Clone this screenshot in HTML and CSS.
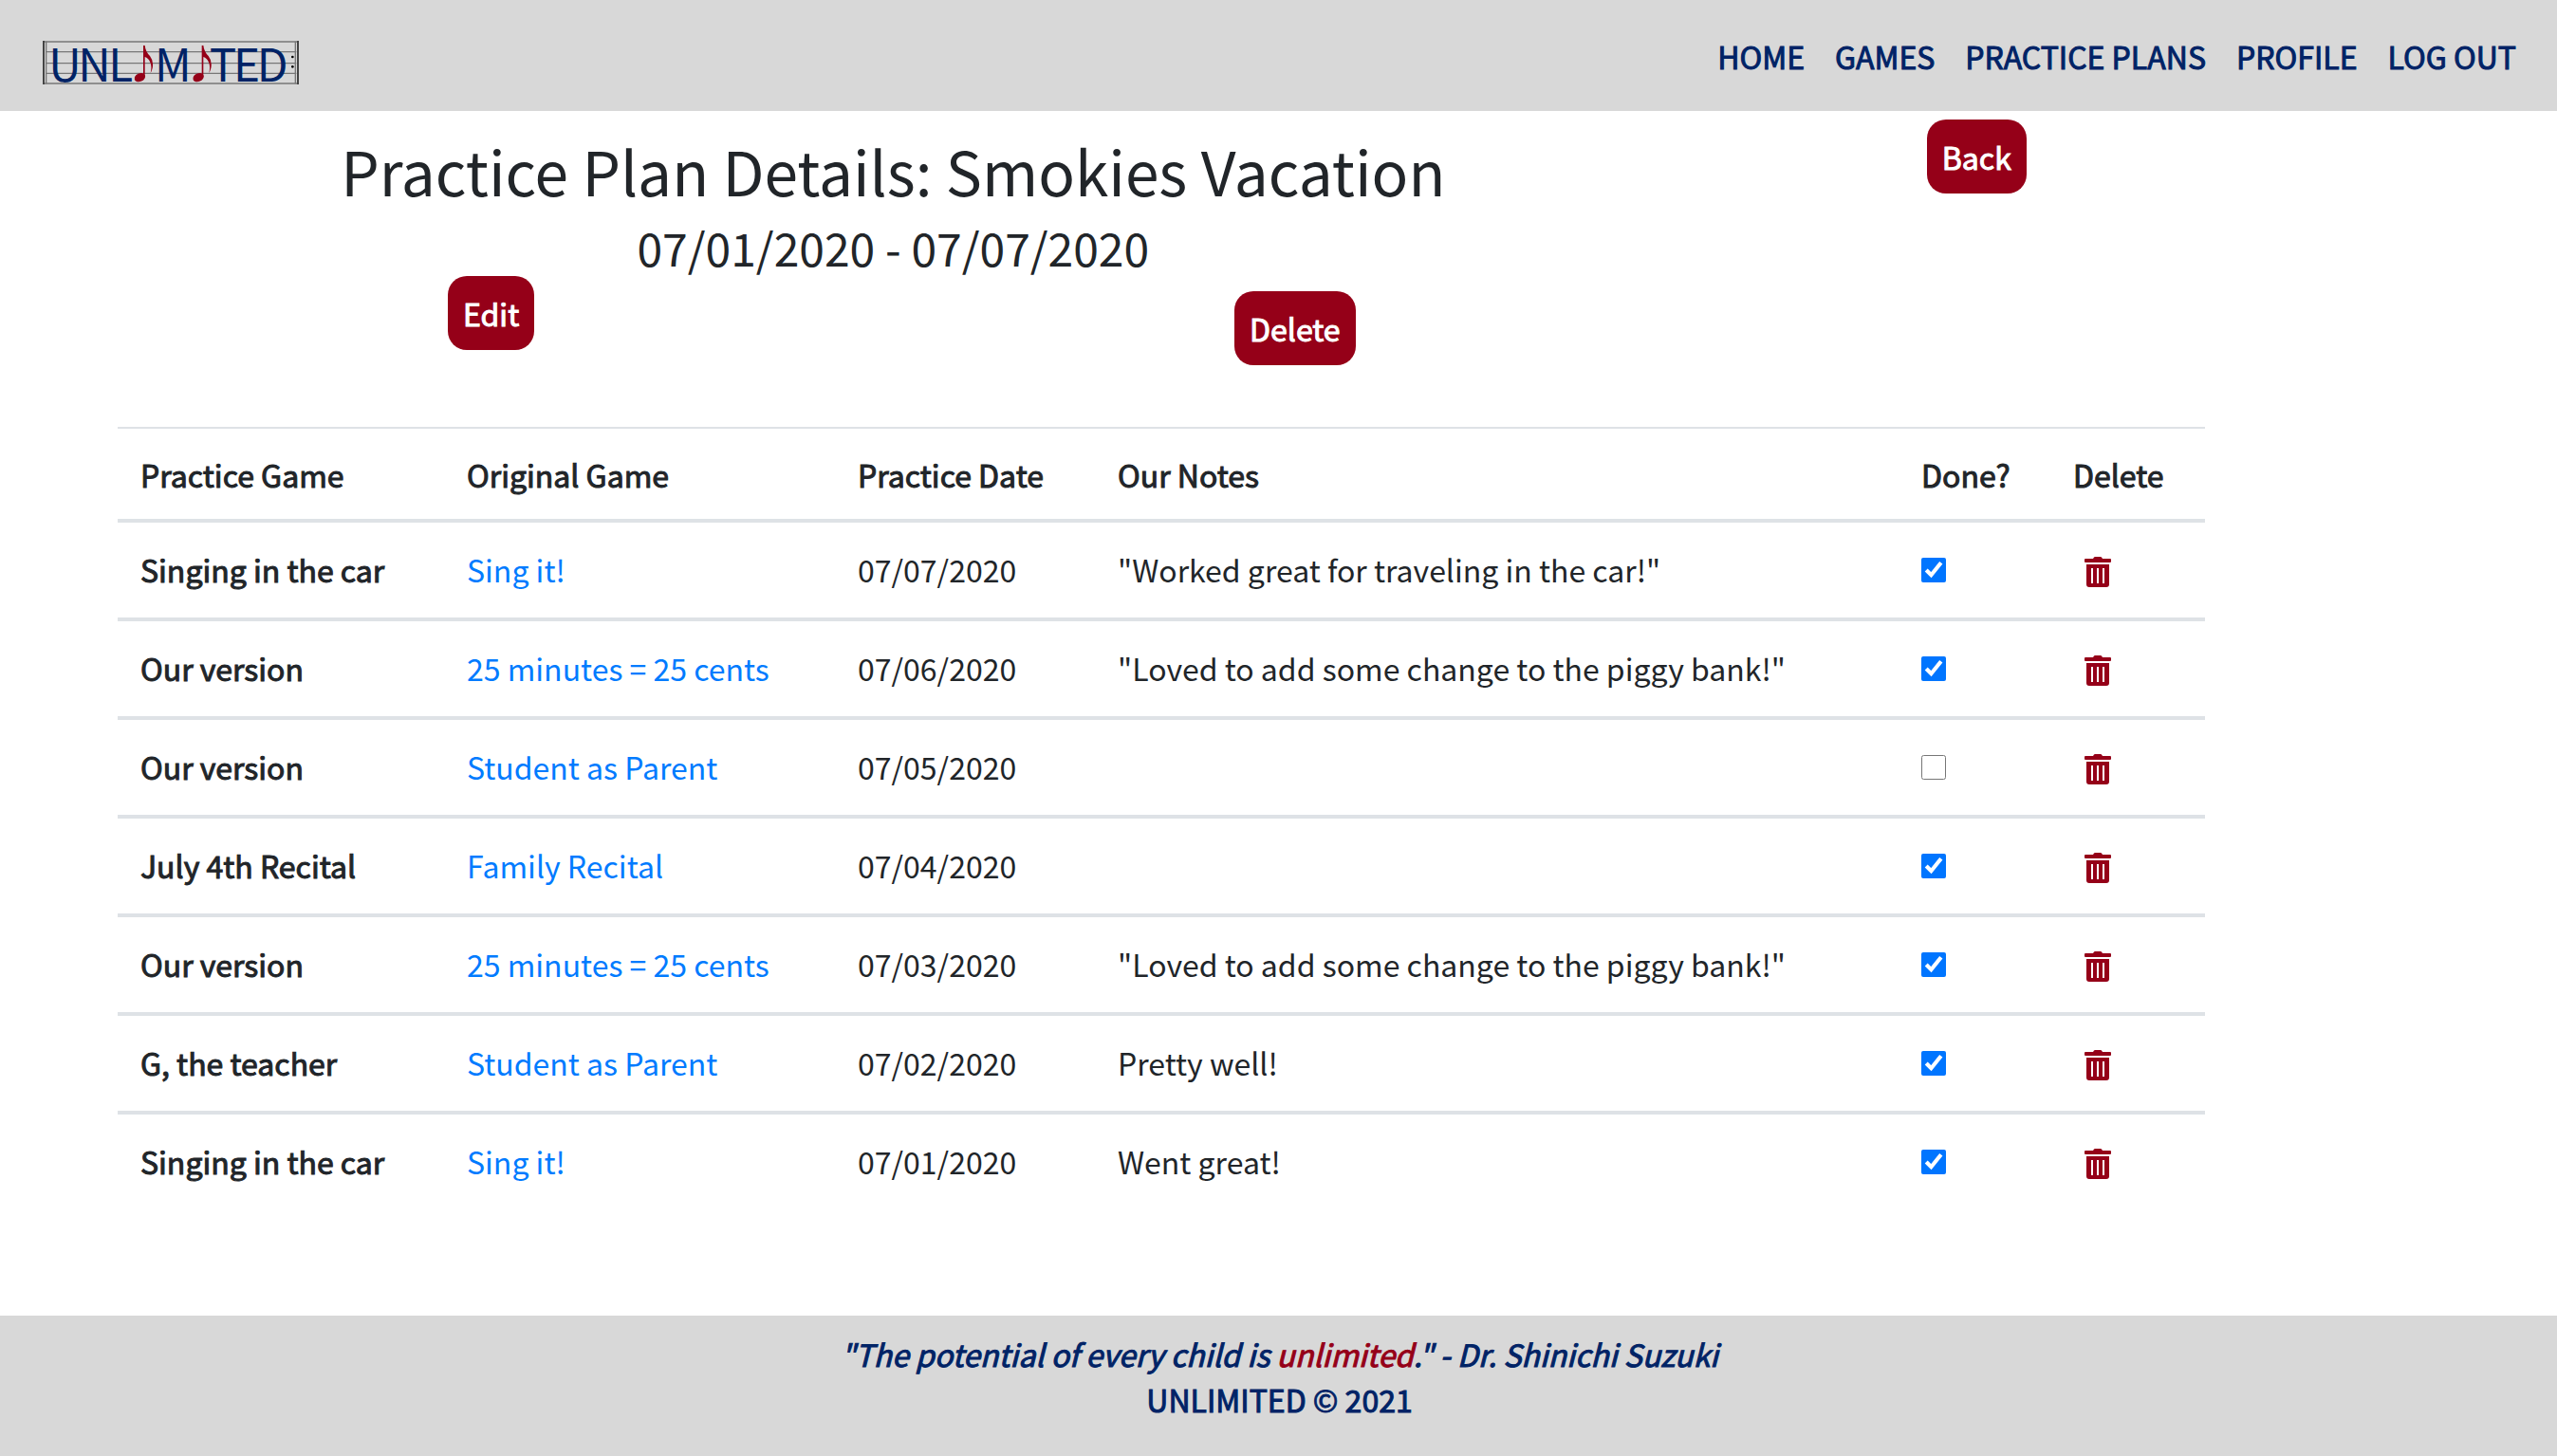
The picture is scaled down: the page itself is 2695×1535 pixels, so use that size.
FILE: index.html
```html
<!DOCTYPE html>
<html lang="en">
<head>
<meta charset="utf-8">
<meta name="viewport" content="width=device-width, initial-scale=1">
<title>Practice Plan Details</title>
<link rel="stylesheet" href="styles.css">
</head>
<body>
<svg class="sprite" aria-hidden="true">
  <symbol id="trash" viewBox="0 0 28 32">
    <path fill-rule="evenodd" d="M1 2h8l1-1.500q.4-.5 1-.5h6q.6 0 1 .5L19 2h8q1 0 1 1v2q0 1-1 1H1Q0 6 0 5V3q0-1 1-1zM2 8h24v21q0 3-3 3H5q-3 0-3-3zM7 12v16h2V12zM13 12v16h2V12zM19 12v16h2V12z"/>
  </symbol>
  <symbol id="note" viewBox="0 0 60 118">
    <ellipse cx="17" cy="102" rx="18" ry="13" transform="rotate(-25 17 102)"/>
    <path d="M28 0h5q2 20 16 34 14 18 7 42-2 8-5 12 5-22-1-34-6-14-17-17v64h-5z"/>
  </symbol>
</svg>
<header class="topbar">
  <a class="brand" href="#" aria-label="Unlimited home">
    <svg class="logo" viewBox="0 0 810 138">
      <g class="staff">
        <path d="M0 3h810M10 35h792M10 71h792M10 103h792M0 135h810"/>
        <path d="M11 2v134M799 2v134"/>
      </g>
      <path class="bars" d="M3 0v138M807 0v138"/>
      <g class="letters">
        <text x="19 112 208" y="130">UNL</text>
        <text x="354" y="130">M</text>
        <text x="527 603 677" y="130">TED</text>
      </g>
      <g class="notes">
        <use href="#note" x="290" y="14" width="60" height="118"/>
        <use href="#note" x="475" y="14" width="60" height="118"/>
      </g>
      <circle cx="790" cy="51" r="4"/><circle cx="790" cy="82" r="4"/>
    </svg>
  </a>
  <nav class="menu">
    <a href="#">HOME</a>
    <a href="#">GAMES</a>
    <a href="#">PRACTICE PLANS</a>
    <a href="#">PROFILE</a>
    <a href="#">LOG OUT</a>
  </nav>
</header>
<main>
  <section class="intro">
    <div class="plan">
      <h1>Practice Plan Details: Smokies Vacation</h1>
      <h2>07/01/2020 - 07/07/2020</h2>
      <div class="actions">
        <button class="btn" type="button">Edit</button>
        <button class="btn btn-delete" type="button">Delete</button>
      </div>
    </div>
    <div class="back"><button class="btn" type="button">Back</button></div>
  </section>
  <table class="games">
    <colgroup><col class="c-game"><col class="c-orig"><col class="c-date"><col class="c-notes"><col class="c-done"><col class="c-del"></colgroup>
    <thead>
      <tr><th scope="col">Practice Game</th><th scope="col">Original Game</th><th scope="col">Practice Date</th><th scope="col">Our Notes</th><th scope="col">Done?</th><th scope="col">Delete</th></tr>
    </thead>
    <tbody>
      <tr><th scope="row">Singing in the car</th><td><a href="#">Sing it!</a></td><td>07/07/2020</td><td>"Worked great for traveling in the car!"</td><td><input type="checkbox" aria-label="Done 07/07/2020" checked></td><td><button class="trash" type="button" aria-label="Delete 07/07/2020"><svg><use href="#trash"/></svg></button></td></tr>
      <tr><th scope="row">Our version</th><td><a href="#">25 minutes = 25 cents</a></td><td>07/06/2020</td><td>"Loved to add some change to the piggy bank!"</td><td><input type="checkbox" aria-label="Done 07/06/2020" checked></td><td><button class="trash" type="button" aria-label="Delete 07/06/2020"><svg><use href="#trash"/></svg></button></td></tr>
      <tr><th scope="row">Our version</th><td><a href="#">Student as Parent</a></td><td>07/05/2020</td><td></td><td><input type="checkbox" aria-label="Done 07/05/2020"></td><td><button class="trash" type="button" aria-label="Delete 07/05/2020"><svg><use href="#trash"/></svg></button></td></tr>
      <tr><th scope="row">July 4th Recital</th><td><a href="#">Family Recital</a></td><td>07/04/2020</td><td></td><td><input type="checkbox" aria-label="Done 07/04/2020" checked></td><td><button class="trash" type="button" aria-label="Delete 07/04/2020"><svg><use href="#trash"/></svg></button></td></tr>
      <tr><th scope="row">Our version</th><td><a href="#">25 minutes = 25 cents</a></td><td>07/03/2020</td><td>"Loved to add some change to the piggy bank!"</td><td><input type="checkbox" aria-label="Done 07/03/2020" checked></td><td><button class="trash" type="button" aria-label="Delete 07/03/2020"><svg><use href="#trash"/></svg></button></td></tr>
      <tr><th scope="row">G, the teacher</th><td><a href="#">Student as Parent</a></td><td>07/02/2020</td><td>Pretty well!</td><td><input type="checkbox" aria-label="Done 07/02/2020" checked></td><td><button class="trash" type="button" aria-label="Delete 07/02/2020"><svg><use href="#trash"/></svg></button></td></tr>
      <tr><th scope="row">Singing in the car</th><td><a href="#">Sing it!</a></td><td>07/01/2020</td><td>Went great!</td><td><input type="checkbox" aria-label="Done 07/01/2020" checked></td><td><button class="trash" type="button" aria-label="Delete 07/01/2020"><svg><use href="#trash"/></svg></button></td></tr>
    </tbody>
  </table>
</main>
<footer class="footer">
  <p class="quote">"The potential of every child is <span>unlimited</span>." - Dr. Shinichi Suzuki</p>
  <p>UNLIMITED © 2021</p>
</footer>
</body>
</html>
```
FILE: styles.css
```css
* { box-sizing: border-box; }
body {
  margin: 0;
  min-height: 100vh;
  display: flex;
  flex-direction: column;
  background: #fff;
  color: #212529;
  font: 400 32px/48px "Noto Sans CJK JP", "Noto Sans", sans-serif;
}
h1, h2, p { margin: 0; }
a { color: #007bff; text-decoration: none; }
.sprite { position: absolute; width: 0; height: 0; }
.menu a, .btn, .games th, .footer { -webkit-text-stroke: 1px; }

.topbar {
  display: flex;
  justify-content: space-between;
  align-items: center;
  height: 117px;
  padding: 0 43px 0 44px;
  background: #d8d8d8;
}
.brand { display: flex; padding-top: 14px; }
.logo { width: 272px; height: 46px; overflow: visible; }
.staff { fill: none; stroke: #777; stroke-width: 4; }
.bars { fill: none; stroke: #444; stroke-width: 6; }
.letters { fill: #002366; font: 400 143px "Noto Sans CJK JP", "Noto Sans", sans-serif; }
.notes { fill: #950018; }
.menu { display: flex; gap: 32px; }
.menu a { color: #002366; }

main { flex: 1; }
.intro {
  display: grid;
  grid-template-columns: 2fr 1fr;
  padding: 9px 231px 0 180px;
  text-align: center;
}
h1 { font-size: 64px; line-height: 84px; font-weight: 400; padding-top: 11px; }
h2 { font-size: 48px; line-height: 62px; font-weight: 400; padding-top: 8px; }
.actions {
  display: flex;
  justify-content: space-between;
  align-items: flex-start;
  padding: 0 18% 0 292px;
}
.btn {
  height: 78px;
  padding: 0 16px;
  border: 0;
  border-radius: 20px;
  background: #950018;
  color: #fff;
  font: 400 32px/48px "Noto Sans CJK JP", "Noto Sans", sans-serif;
}
.btn-delete { margin-top: 16px; }

.games {
  width: calc(100% - 495px);
  margin: 65px 0 0 124px;
  border-collapse: separate;
  border-spacing: 0;
  table-layout: fixed;
  text-align: left;
}
.c-game { width: 344px; }
.c-orig { width: 412px; }
.c-date { width: 274px; }
.c-done { width: 160px; }
.c-del { width: 163px; }
.games th, .games td { height: 104px; padding: 0 0 2px 24px; border-bottom: 4px solid #dee2e6; }
.games thead th { height: 101px; padding-bottom: 0; border-top: 2px solid #dee2e6; }
.games tbody tr:last-child > * { height: 100px; border-bottom: 0; }
.games th { font-weight: 400; }
.games input { display: block; width: 26px; height: 26px; margin: 2px 0 0; accent-color: #0075ff; }
.trash { display: block; margin: 6px 0 0 12px; padding: 0; border: 0; background: none; }
.trash svg { display: block; width: 28px; height: 32px; fill: #950018; }

.footer {
  height: 148px;
  padding: 16px 0 0 2px;
  background: #d8d8d8;
  color: #002366;
  text-align: center;
}
.quote { font-style: italic; }
.quote span { color: #950018; }
```
